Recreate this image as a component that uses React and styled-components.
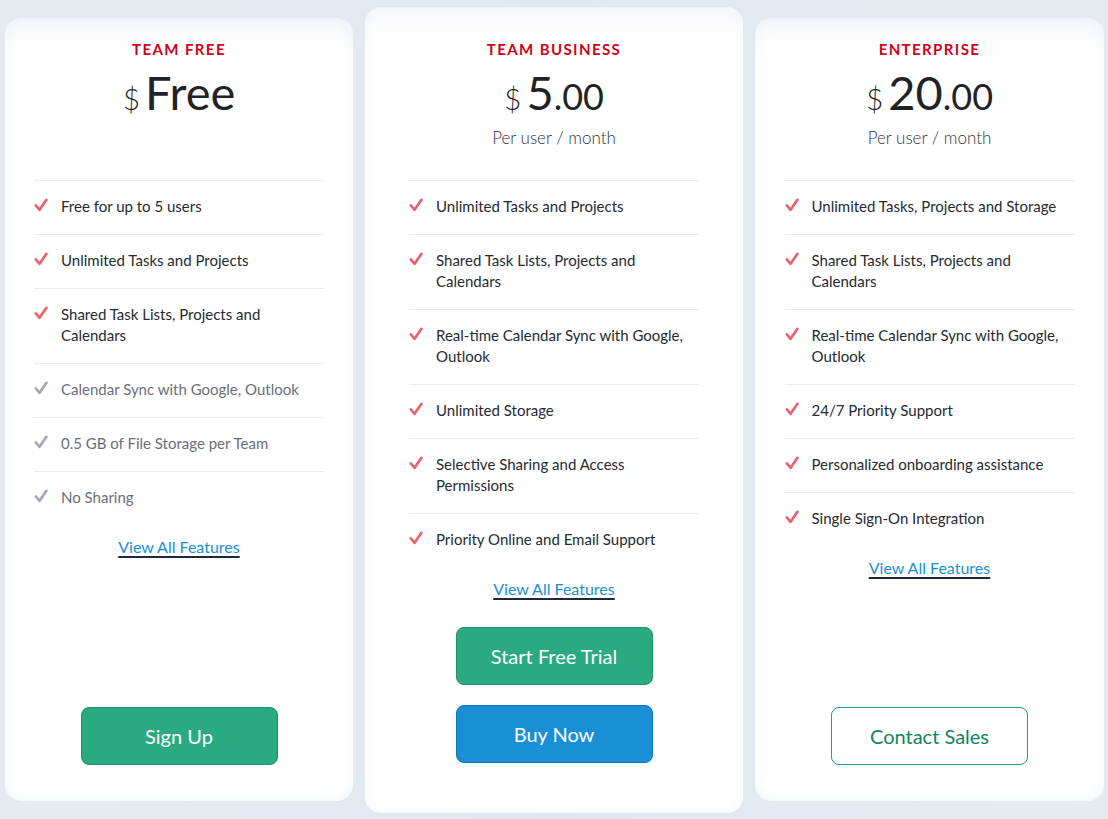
import React from 'react';
import styled, { createGlobalStyle } from 'styled-components';

const GlobalStyle = createGlobalStyle`
  html, body {
    margin: 0;
    padding: 0;
    background: #e5eaf0;
    font-family: Lato, "Open Sans", "Liberation Sans", sans-serif;
  }
`;

const plans = [
  {
    name: 'TEAM FREE',
    amount: 'Free',
    cents: '',
    period: '',
    features: [
      { text: 'Free for up to 5 users' },
      { text: 'Unlimited Tasks and Projects' },
      { text: 'Shared Task Lists, Projects and Calendars' },
      { text: 'Calendar Sync with Google, Outlook', muted: true },
      { text: '0.5 GB of File Storage per Team', muted: true },
      { text: 'No Sharing', muted: true },
    ],
    buttons: [{ label: 'Sign Up', kind: 'green' }],
  },
  {
    name: 'TEAM BUSINESS',
    amount: '5',
    cents: '.00',
    period: 'Per user / month',
    featured: true,
    features: [
      { text: 'Unlimited Tasks and Projects' },
      { text: 'Shared Task Lists, Projects and Calendars' },
      { text: 'Real-time Calendar Sync with Google, Outlook' },
      { text: 'Unlimited Storage' },
      { text: 'Selective Sharing and Access Permissions' },
      { text: 'Priority Online and Email Support' },
    ],
    buttons: [
      { label: 'Start Free Trial', kind: 'green' },
      { label: 'Buy Now', kind: 'blue' },
    ],
  },
  {
    name: 'ENTERPRISE',
    amount: '20',
    cents: '.00',
    period: 'Per user / month',
    features: [
      { text: 'Unlimited Tasks, Projects and Storage' },
      { text: 'Shared Task Lists, Projects and Calendars' },
      { text: 'Real-time Calendar Sync with Google, Outlook' },
      { text: '24/7 Priority Support' },
      { text: 'Personalized onboarding assistance' },
      { text: 'Single Sign-On Integration' },
    ],
    buttons: [{ label: 'Contact Sales', kind: 'outline' }],
  },
];

const Check = ({ muted }) => (
  <CheckIcon viewBox="0 0 14 14" width="14" height="14">
    <polyline
      points="1.8,7.4 5.6,11.8 12.4,1.8"
      fill="none"
      stroke={muted ? '#a4a7ba' : '#e8636e'}
      strokeWidth="2.7"
      strokeLinecap="round"
      strokeLinejoin="round"
    />
  </CheckIcon>
);

export default function App() {
  return (
    <>
      <GlobalStyle />
      <Page>
        {plans.map(plan => (
          <Card key={plan.name} featured={plan.featured}>
            <Header>
              <PlanName>{plan.name}</PlanName>
              <Price>
                <Currency>$</Currency>
                <Amount>{plan.amount}</Amount>
                {plan.cents && <Cents>{plan.cents}</Cents>}
              </Price>
              {plan.period && <Period>{plan.period}</Period>}
            </Header>

            <FeatureList>
              {plan.features.map(f => (
                <Feature key={f.text} muted={f.muted}>
                  <Check muted={f.muted} />
                  <span>{f.text}</span>
                </Feature>
              ))}
            </FeatureList>

            <ViewAll href="#">View All Features</ViewAll>

            <Actions featured={plan.featured}>
              {plan.buttons.map(b => (
                <Button key={b.label} kind={b.kind}>
                  {b.label}
                </Button>
              ))}
            </Actions>
          </Card>
        ))}
      </Page>
    </>
  );
}

const Page = styled.div`
  display: grid;
  grid-template-columns: 348px 378px 349px;
  column-gap: 12px;
  align-items: stretch;
  padding: 7px 4px 6px 5px;
  background: linear-gradient(90deg, #e6eaef 0%, #dfe8f1 50%, #e6eaef 100%);
`;

const Card = styled.div`
  display: flex;
  flex-direction: column;
  align-items: center;
  border-radius: 16px;
  margin: ${({ featured }) => (featured ? '0' : '11px 0 12px')};
  padding: ${({ featured }) => (featured ? '32px 0 50px' : '21px 0 36px')};
  background: linear-gradient(180deg, #f7f8fa 0px, #ffffff 36px);
  box-shadow: ${({ featured }) =>
    featured
      ? 'inset 0 0 8px rgba(228, 235, 242, 0.4)'
      : 'inset 0 0 14px rgba(222, 232, 242, 0.45)'};
`;

const Header = styled.div`
  height: 141px;
  display: flex;
  flex-direction: column;
  align-items: center;
`;

const PlanName = styled.div`
  font-size: 15px;
  line-height: 20px;
  font-weight: 700;
  letter-spacing: 1.4px;
  color: #d0021b;
`;

const Price = styled.div`
  margin-top: 5px;
  height: 56px;
  display: flex;
  align-items: baseline;
  color: #1f2328;
  line-height: 56px;
`;

const Currency = styled.span`
  font-size: 30px;
  font-weight: 300;
  margin-right: 5px;
`;

const Amount = styled.span`
  font-size: 47px;
  font-weight: 400;
`;

const Cents = styled.span`
  font-size: 36px;
  font-weight: 400;
`;

const Period = styled.div`
  margin-top: 6px;
  font-size: 17px;
  line-height: 24px;
  font-weight: 300;
  color: #2f343b;
`;

const FeatureList = styled.ul`
  list-style: none;
  margin: 0;
  padding: 0;
  width: 290px;
`;

const Feature = styled.li`
  display: flex;
  align-items: flex-start;
  gap: 13px;
  border-top: 1px solid #e9ebee;
  padding: 15px 0 17px;
  font-size: 15px;
  line-height: 21px;
  color: ${({ muted }) => (muted ? '#6a6e79' : '#262a31')};
`;

const CheckIcon = styled.svg`
  flex: none;
  margin-top: 2px;
`;

const ViewAll = styled.a`
  margin-top: 12px;
  font-size: 16px;
  line-height: 20px;
  color: #1b8fd6;
  text-decoration: underline;
  text-decoration-color: #1f2838;
  text-decoration-thickness: 1.5px;
  text-underline-offset: 3px;
`;

const Actions = styled.div`
  display: flex;
  flex-direction: column;
  gap: 20px;
  margin-top: ${({ featured }) => (featured ? '28px' : 'auto')};
`;

const buttonColors = {
  green: { bg: '#2aaa80', border: '#1d9068', text: '#ffffff' },
  blue: { bg: '#1a8fd6', border: '#0d74b6', text: '#ffffff' },
  outline: { bg: '#ffffff', border: '#2a9c72', text: '#0e8657' },
};

const Button = styled.button`
  width: 197px;
  height: 58px;
  border-radius: 8px;
  border: 1px solid ${({ kind }) => buttonColors[kind].border};
  background: ${({ kind }) => buttonColors[kind].bg};
  color: ${({ kind }) => buttonColors[kind].text};
  font-family: Lato, "Open Sans", sans-serif;
  font-size: 20px;
  cursor: pointer;
`;
